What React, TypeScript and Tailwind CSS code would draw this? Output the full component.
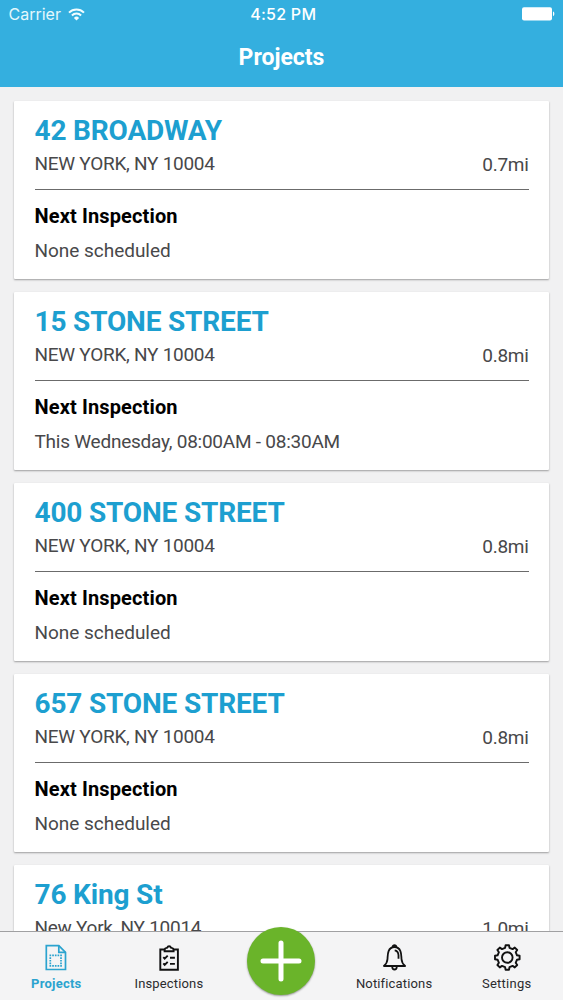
import type { ReactNode } from "react";

interface Project {
  name: string;
  city: string;
  distance: string;
  next: string;
}

const projects: Project[] = [
  { name: "42 BROADWAY", city: "NEW YORK, NY 10004", distance: "0.7mi", next: "None scheduled" },
  { name: "15 STONE STREET", city: "NEW YORK, NY 10004", distance: "0.8mi", next: "This Wednesday, 08:00AM - 08:30AM" },
  { name: "400 STONE STREET", city: "NEW YORK, NY 10004", distance: "0.8mi", next: "None scheduled" },
  { name: "657 STONE STREET", city: "NEW YORK, NY 10004", distance: "0.8mi", next: "None scheduled" },
  { name: "76 King St", city: "New York, NY 10014", distance: "1.0mi", next: "None scheduled" },
];

function StatusBar() {
  return (
    <div className="grid h-7 grid-cols-3 items-center pl-[8.5px] pr-[8px] font-['Inter',sans-serif] text-[16px] leading-5">
      <div className="flex items-center gap-[7px]">
        <span className="text-[#e4f8fc]">Carrier</span>
        <svg width="17" height="13" viewBox="0 0 17 13" fill="none" stroke="#f2fdff" strokeWidth="2">
          <path d="M1 4.6a10.6 10.6 0 0 1 15 0" />
          <path d="M3.9 7.5a6.5 6.5 0 0 1 9.2 0" />
          <path d="M8.5 12.6 5.9 9.9a3.7 3.7 0 0 1 5.2 0z" fill="#f2fdff" stroke="none" />
        </svg>
      </div>
      <span className="pl-[3px] text-center font-medium tracking-[0.25px]">4:52 PM</span>
      <svg className="justify-self-end" width="34" height="14" viewBox="0 0 34 14" fill="#fff">
        <rect x="1" y="0.3" width="30" height="13.2" rx="2" />
        <path d="M32 4.6c1.800.4 1.800 4.200 0 4.600z" />
      </svg>
    </div>
  );
}

function ProjectCard({ project }: { project: Project }) {
  return (
    <article className="h-[178px] shrink-0 rounded-[1px] bg-white px-[20.5px] pt-[14px] shadow-[0_1px_2px_rgba(0,0,0,0.35)]">
      <h2 className="h-8 whitespace-nowrap text-[28px] font-bold leading-8 tracking-[-0.17px] text-[#1d9fd0]">
        {project.name}
      </h2>
      <div className="mt-[5px] flex h-[38px] justify-between border-b border-[#6b6b6b] text-[19px] leading-6 text-[#48484a]">
        <span className="tracking-[-0.27px]">{project.city}</span>
        <span className="pt-px tracking-[-0.3px]">{project.distance}</span>
      </div>
      <h3 className="mt-[14px] text-[20px] font-bold leading-6 tracking-[0.13px] text-black">Next Inspection</h3>
      <p className="mt-[11px] whitespace-nowrap text-[19px] leading-6 tracking-[-0.2px] text-[#48484a]">
        <span className={project.next === "None scheduled" ? "tracking-[-0.03px]" : "tracking-[-0.24px]"}>
          {project.next}
        </span>
      </p>
    </article>
  );
}

function ProjectsIcon() {
  return (
    <svg width="28" height="28" viewBox="0 0 28 28" fill="none" stroke="#2ba3cf" strokeWidth="1.7">
      <path d="M4.300 2.600h12.500l6.700 6.700v17.200H4.300z" />
      <path d="M16.800 2.600v6.700h6.700" />
      <path d="M7.500 12.400h12.400M7.500 22.800h12.400" strokeDasharray="1.700 0.980" />
      <path d="M8.300 14.200v8M19 14.200v8" strokeDasharray="1.700 0.980" />
    </svg>
  );
}

function InspectionsIcon() {
  return (
    <svg width="28" height="28" viewBox="0 0 28 28" fill="none" stroke="#111" strokeWidth="1.900">
      <path d="M9.500 6.500H5.300v20.200h17.600V6.500h-4.200" />
      <path d="M9.600 8.300V7c0-1.200.7-1.900 1.800-2.100l.8-.2a2 2 0 0 1 3.800 0l.8.2c1.100.2 1.800.9 1.800 2.100v1.300z" />
      <path d="m8.300 14.200 1.400 1.500 3-3M8.300 20.400l1.400 1.500 3-3M15 14.700h4.900M15 20.900h4.900" />
    </svg>
  );
}

function BellIcon() {
  return (
    <svg width="28" height="28" viewBox="0 0 28 28" fill="none" stroke="#111" strokeWidth="1.800" strokeLinejoin="round">
      <path d="M3.900 23h21.200c-2.200-1.800-3.400-4-3.600-7-.2-3-.1-5.500-1.100-7.900C19.300 5.400 17.200 4 14.500 4S9.700 5.400 8.600 8.100c-1 2.400-.9 4.900-1.100 7.900-.2 3-1.400 5.200-3.600 7z" />
      <path d="M12.700 4a1.800 1.800 0 1 1 3.600 0M12.300 23.400v.9a2.200 2.200 0 0 0 4.400 0v-.9" />
      <path d="M14.700 7.300c2.600.3 3.700 2.500 3.800 5v3.500" />
    </svg>
  );
}

function GearIcon() {
  return (
    <svg width="28" height="28" viewBox="0 0 28 28" fill="none" stroke="#111" strokeWidth="1.900" strokeLinejoin="round">
      <circle cx="14.300" cy="14.500" r="5.300" />
      {/* eight teeth, one every 45 degrees */}
      <path d="M12.100 4.800l.5-2.600h3.400l.5 2.600 3.100 1.300 2.200-1.500 2.400 2.400-1.500 2.200 1.300 3.100 2.600.5v3.400l-2.600.5-1.300 3.100 1.500 2.200-2.400 2.400-2.200-1.500-3.100 1.300-.5 2.600h-3.400l-.5-2.600L9 22.900l-2.200 1.500L4.400 22l1.500-2.200-1.300-3.100-2.600-.5v-3.400l2.600-.5 1.300-3.100L4.400 7l2.400-2.400L9 6.100z" />
    </svg>
  );
}

function Tab({ icon, label, className }: { icon: ReactNode; label: string; className: string }) {
  return (
    <div className="flex min-w-0 flex-col items-center pt-[11px]">
      {icon}
      <span className={`mt-[5px] whitespace-nowrap text-[13px] leading-4 ${className}`}>{label}</span>
    </div>
  );
}

export default function App() {
  return (
    <div className="flex h-[1000px] w-[563px] flex-col overflow-hidden bg-[#f1f1f2] font-['Roboto',sans-serif]">
      <header className="h-[87px] shrink-0 bg-[#34afdf] text-white">
        <StatusBar />
        <h1 className="mt-4 text-center text-[23px] font-bold leading-7">Projects</h1>
      </header>

      <main className="flex min-h-0 flex-1 flex-col gap-[13px] overflow-hidden px-[14px] pt-[14px]">
        {projects.map((project) => (
          <ProjectCard key={project.name} project={project} />
        ))}
      </main>

      <nav className="grid h-[69px] shrink-0 grid-cols-5 border-t border-[#a0a0a2] bg-[#f4f4f5]">
        <Tab icon={<ProjectsIcon />} label="Projects" className="font-bold tracking-[0.25px] text-[#2ba3cf]" />
        <Tab icon={<InspectionsIcon />} label="Inspections" className="tracking-[0.15px] text-[#2b2b2d]" />
        <div className="relative">
          {/* raised add button, overlaps the list above the bar */}
          <button
            aria-label="Add"
            className="absolute left-1/2 top-[-5px] flex size-[68px] -translate-x-1/2 items-center justify-center rounded-full bg-[#6ab42a] shadow-[0_1px_2px_rgba(0,0,0,0.4)]"
          >
            <svg width="42" height="42" viewBox="0 0 42 42" stroke="#fff" strokeWidth="5" strokeLinecap="round">
              <path d="M21 3v36M3 21h36" />
            </svg>
          </button>
        </div>
        <Tab icon={<BellIcon />} label="Notifications" className="tracking-[0.15px] text-[#2b2b2d]" />
        <Tab icon={<GearIcon />} label="Settings" className="tracking-[0.25px] text-[#2b2b2d]" />
      </nav>
    </div>
  );
}
